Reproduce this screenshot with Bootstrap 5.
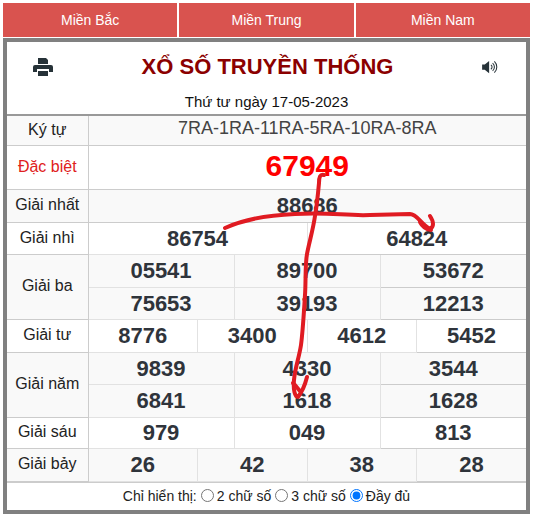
<!DOCTYPE html>
<html lang="vi">
<head>
<meta charset="utf-8">
<title>Xổ số truyền thống</title>
<link href="https://cdn.jsdelivr.net/npm/bootstrap@5.3.0/dist/css/bootstrap.min.css" rel="stylesheet">
<style>
html,body{background:#fff;margin:0;font-family:"Liberation Sans",Arial,sans-serif;color:#222}
.pagewrap{position:relative;width:534px;height:518px;padding:3px 4px 0 3px}
.tabsbar{height:34px;gap:2px;margin-bottom:1px}
.tabitem{flex:1 1 0;background:#d9534f;color:#fff;font-size:14px;line-height:34px;text-align:center;text-decoration:none}
.panelbox{border:4px solid #808080;height:476px;background:#fff}
.headrow{height:46px;padding:3px 28px 0 26px}
.titletext{font-size:22px;font-weight:700;color:#8b0000;margin:0;line-height:1;font-family:"Liberation Sans",sans-serif}
.datetext{height:26px;font-size:15px;text-align:center;line-height:28px;color:#111}
.kqtable{table-layout:fixed;width:100%;margin:0;border-collapse:collapse;border-top:2px solid #999}
.kqtable td{border:1px solid #ccc;padding:0;text-align:center;vertical-align:middle;overflow:hidden;background:transparent;box-shadow:none;line-height:1.2}
.kqtable tr td:first-child{border-left:0}
.kqtable tr td:last-child{border-right:0}
.kqtable .inner{border-color:#e2e2e2}
.zebra td{background:#f9f9f9}
.kqtable .lbl{font-size:16px;color:#222;padding-bottom:1px}
.kqtable .num{font-size:22px;font-weight:700;color:#2f343b;padding-top:2px}
.kqtable .codes{font-size:18px;color:#444;padding-bottom:3px}
.kqtable .special{font-size:30px;font-weight:700;color:#f00;padding-bottom:2px}
.kqtable .lblred{color:#e02020}
.h30{height:30px}.h31{height:31px}.h44{height:44px}.h33{height:33px}.h32{height:32px}
.footbar{height:28px;font-size:14px;color:#222;gap:4px;border-top:1px solid #ccc;padding-top:1px}
.footbar input{margin:0 3px 0 0;width:13px;height:13px;vertical-align:-1px}
.scribble{position:absolute;left:0;top:0;pointer-events:none}
</style>
</head>
<body>
<div class="pagewrap">
  <nav class="d-flex tabsbar">
    <a class="tabitem" href="#">Miền Bắc</a>
    <a class="tabitem" href="#">Miền Trung</a>
    <a class="tabitem" href="#">Miền Nam</a>
  </nav>
  <div class="panelbox">
    <div class="d-flex align-items-center justify-content-between headrow">
      <svg width="20" height="18" viewBox="0 0 20 18" aria-label="In"><path fill="#263238" d="M5 0h8l2 2v4H5zM2 7h16a2 2 0 0 1 2 2v5h-4v-3H4v3H0V9a2 2 0 0 1 2-2zM5 13h10v5H5z"/></svg>
      <h1 class="titletext">XỔ SỐ TRUYỀN THỐNG</h1>
      <svg width="16" height="14" viewBox="0 0 18 16" aria-label="Âm thanh"><path fill="#263238" d="M0 5h3l5-4v14l-5-4H0z"/><path fill="none" stroke="#263238" stroke-width="1.2" d="M10 5.5a3 3 0 0 1 0 5M12 3.5a6 6 0 0 1 0 9M14 1.5a9 9 0 0 1 0 13"/></svg>
    </div>
    <div class="datetext">Thứ tư ngày 17-05-2023</div>
    <table class="table kqtable">
      <colgroup><col style="width:81px"><col span="12"></colgroup>
      <tr class="zebra h30"><td class="lbl">Ký tự</td><td colspan="12" class="codes">7RA-1RA-11RA-5RA-10RA-8RA</td></tr>
      <tr class="h44"><td class="lbl lblred">Đặc biệt</td><td colspan="12" class="special">67949</td></tr>
      <tr class="zebra h33"><td class="lbl">Giải nhất</td><td colspan="12" class="num">88686</td></tr>
      <tr class="h32"><td class="lbl">Giải nhì</td><td colspan="6" class="num inner">86754</td><td colspan="6" class="num">64824</td></tr>
      <tr class="zebra h33"><td class="lbl" rowspan="2">Giải ba</td><td colspan="4" class="num inner">05541</td><td colspan="4" class="num inner">89700</td><td colspan="4" class="num">53672</td></tr>
      <tr class="zebra h32"><td colspan="4" class="num inner">75653</td><td colspan="4" class="num inner">39193</td><td colspan="4" class="num">12213</td></tr>
      <tr class="h33"><td class="lbl">Giải tư</td><td colspan="3" class="num inner">8776</td><td colspan="3" class="num inner">3400</td><td colspan="3" class="num inner">4612</td><td colspan="3" class="num">5452</td></tr>
      <tr class="zebra h32"><td class="lbl" rowspan="2">Giải năm</td><td colspan="4" class="num inner">9839</td><td colspan="4" class="num inner">4330</td><td colspan="4" class="num">3544</td></tr>
      <tr class="zebra h33"><td colspan="4" class="num inner">6841</td><td colspan="4" class="num inner">1618</td><td colspan="4" class="num">1628</td></tr>
      <tr class="h31"><td class="lbl">Giải sáu</td><td colspan="4" class="num inner">979</td><td colspan="4" class="num inner">049</td><td colspan="4" class="num">813</td></tr>
      <tr class="zebra h33"><td class="lbl">Giải bảy</td><td colspan="3" class="num inner">26</td><td colspan="3" class="num inner">42</td><td colspan="3" class="num inner">38</td><td colspan="3" class="num">28</td></tr>
    </table>
    <div class="d-flex align-items-center justify-content-center footbar">
      <span>Chỉ hiển thị:</span>
      <label><input type="radio" name="hienthi">2 chữ số</label>
      <label><input type="radio" name="hienthi">3 chữ số</label>
      <label><input type="radio" name="hienthi" checked>Đầy đủ</label>
    </div>
  </div>
  <svg class="scribble" width="534" height="518" viewBox="0 0 534 518" fill="none" stroke="#e01b22" stroke-linecap="round" stroke-linejoin="round" stroke-width="4">
    <path d="M324 175C320 174 319 177 319 183C318 194 317 205 315 216C313 230 309 243 307 254C305 265 306 280 305 295C304 310 303 330 301 345C299 358 295 368 294 380C293 390 295 397 298 397C302 392 305 385 307 377"/>
    <path d="M293 383C296 386 298 389 300 391"/>
    <path d="M225 228C245 219 270 215 295 214C330 212 345 216 370 215L410 214C417 214 421 224 430 229C434 227 434 222 430 216"/>
    <path d="M420 222C422 226 425 229 431 230"/>
  </svg>
</div>
<script src="https://cdn.jsdelivr.net/npm/bootstrap@5.3.0/dist/js/bootstrap.bundle.min.js"></script>
</body>
</html>
